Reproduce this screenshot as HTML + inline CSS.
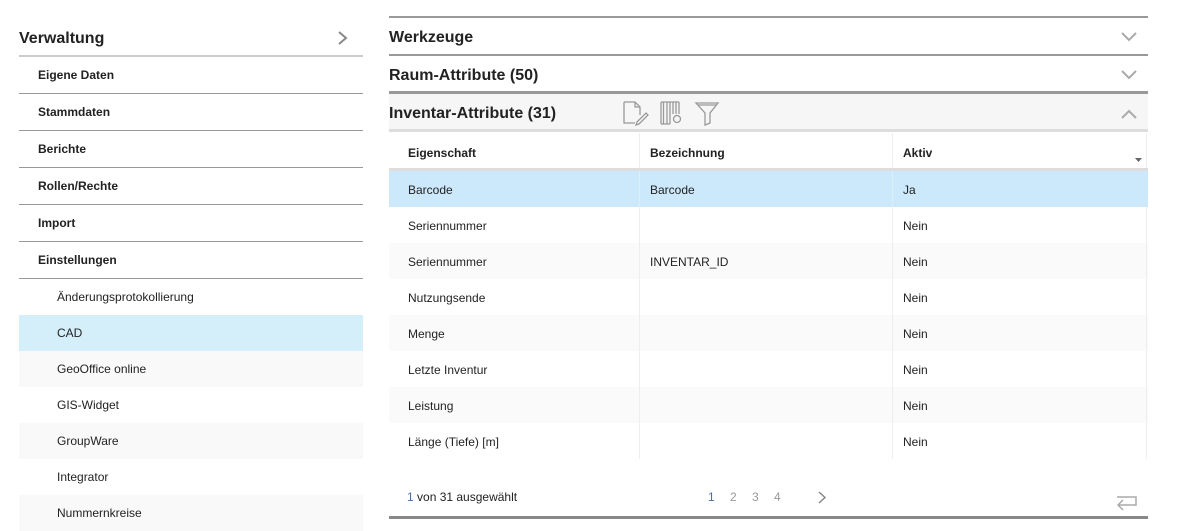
<!DOCTYPE html>
<html><head><meta charset="utf-8"><style>
*{box-sizing:border-box;margin:0;padding:0}
body{width:1182px;height:525px;background:#fff;font-family:"Liberation Sans",Arial,sans-serif;color:#222;position:relative;overflow:hidden}
.abs{position:absolute}
.lh{left:19px;width:344px;top:20px;height:37px;border-bottom:2px solid #ccc;font-size:16px;font-weight:bold;line-height:38px}
.li{left:19px;width:344px;height:37px;border-bottom:1px solid #999;font-size:12px;font-weight:bold;padding-left:19px;line-height:36px}
.ls{left:19px;width:344px;height:36px;font-size:12px;padding-left:38px;line-height:36px}
.rh{left:389px;width:759px;font-size:16px;font-weight:bold;line-height:40px}
.row{left:389px;width:759px;height:36px;font-size:12px;line-height:38px}
.row span{position:absolute;top:0}
.c1{left:19px}.c2{left:261px}.c3{left:514px}
.vl{position:absolute;top:0;bottom:0;width:1px;background:#eee}
</style></head><body>
<div class="abs lh">Verwaltung<svg class="abs" style="left:318px;top:11px" width="12" height="14"><path d="M2 1l7 6-7 6" fill="none" stroke="#888" stroke-width="2"/></svg></div>
<div class="abs li" style="top:57px">Eigene Daten</div>
<div class="abs li" style="top:94px">Stammdaten</div>
<div class="abs li" style="top:131px">Berichte</div>
<div class="abs li" style="top:168px">Rollen/Rechte</div>
<div class="abs li" style="top:205px">Import</div>
<div class="abs li" style="top:242px">Einstellungen</div>
<div class="abs ls" style="top:279px">Änderungsprotokollierung</div>
<div class="abs ls" style="top:315px;background:#d4effa">CAD</div>
<div class="abs ls" style="top:351px;background:#f9f9f9">GeoOffice online</div>
<div class="abs ls" style="top:387px">GIS-Widget</div>
<div class="abs ls" style="top:423px;background:#f9f9f9">GroupWare</div>
<div class="abs ls" style="top:459px">Integrator</div>
<div class="abs ls" style="top:495px;background:#f9f9f9">Nummernkreise</div>

<div class="abs" style="left:389px;width:759px;top:16px;height:2px;background:#999"></div>
<div class="abs rh" style="top:18px;height:38px;border-bottom:2px solid #999">Werkzeuge<svg class="abs" style="left:732px;top:14px" width="16" height="10"><path d="M1 1l7 7 7-7" fill="none" stroke="#aaa" stroke-width="2"/></svg></div>
<div class="abs rh" style="top:56px;height:38px;border-bottom:3px solid #999">Raum-Attribute (50)<svg class="abs" style="left:732px;top:14px" width="16" height="10"><path d="M1 1l7 7 7-7" fill="none" stroke="#aaa" stroke-width="2"/></svg></div>
<div class="abs rh" style="top:94px;height:38px;background:#f6f6f6;border-bottom:3px solid #ddd">Inventar-Attribute (31)
<svg class="abs" style="left:233px;top:6px" width="100" height="26" fill="none" stroke="#999" stroke-width="1.3">
<path d="M2 2h11l5 5v8M2 2v21h11M13 2v5h5"/><path d="M15 22l9-9 2 2-9 9-3 1z"/>
<path d="M39 2v22M41.5 2v22M45 2v22M48 2v22M51 2v12M54 2v12M57 2v12M39 2h18M39 24h9"/><circle cx="55" cy="19" r="3.5"/>
<path d="M74 3h22l-8 10v10l-5 2v-12z"/><path d="M76 5h18"/></svg>
<svg class="abs" style="left:732px;top:15px" width="16" height="10"><path d="M1 9l7-7 7 7" fill="none" stroke="#aaa" stroke-width="2"/></svg></div>

<div class="abs row" style="top:133px;height:38px;line-height:40px;font-weight:bold;border-bottom:3px solid #ddd"><span class="c1">Eigenschaft</span><span class="c2">Bezeichnung</span><span class="c3">Aktiv</span><div class="vl" style="left:250px"></div><div class="vl" style="left:503px"></div><div class="vl" style="left:757px"></div><svg class="abs" style="left:746px;top:25px" width="8" height="5"><path d="M0 0h7l-3.5 4z" fill="#666"/></svg></div>
<div class="abs row" style="top:171px;background:#cce8fb"><span class="c1">Barcode</span><span class="c2">Barcode</span><span class="c3">Ja</span><div class="vl" style="left:250px;background:#dbeefc"></div><div class="vl" style="left:503px;background:#dbeefc"></div></div>
<div class="abs row" style="top:207px"><span class="c1">Seriennummer</span><span class="c3">Nein</span><div class="vl" style="left:250px"></div><div class="vl" style="left:503px"></div><div class="vl" style="left:757px"></div></div>
<div class="abs row" style="top:243px;background:#fafafa"><span class="c1">Seriennummer</span><span class="c2">INVENTAR_ID</span><span class="c3">Nein</span><div class="vl" style="left:250px"></div><div class="vl" style="left:503px"></div><div class="vl" style="left:757px"></div></div>
<div class="abs row" style="top:279px"><span class="c1">Nutzungsende</span><span class="c3">Nein</span><div class="vl" style="left:250px"></div><div class="vl" style="left:503px"></div><div class="vl" style="left:757px"></div></div>
<div class="abs row" style="top:315px;background:#fafafa"><span class="c1">Menge</span><span class="c3">Nein</span><div class="vl" style="left:250px"></div><div class="vl" style="left:503px"></div><div class="vl" style="left:757px"></div></div>
<div class="abs row" style="top:351px"><span class="c1">Letzte Inventur</span><span class="c3">Nein</span><div class="vl" style="left:250px"></div><div class="vl" style="left:503px"></div><div class="vl" style="left:757px"></div></div>
<div class="abs row" style="top:387px;background:#fafafa"><span class="c1">Leistung</span><span class="c3">Nein</span><div class="vl" style="left:250px"></div><div class="vl" style="left:503px"></div><div class="vl" style="left:757px"></div></div>
<div class="abs row" style="top:423px"><span class="c1">Länge (Tiefe) [m]</span><span class="c3">Nein</span><div class="vl" style="left:250px"></div><div class="vl" style="left:503px"></div><div class="vl" style="left:757px"></div></div>

<div class="abs" style="left:407px;top:490px;font-size:12px"><span style="color:#4a6fa5">1</span> von 31 ausgewählt</div>
<div class="abs" style="left:708px;top:490px;font-size:12px;color:#999;word-spacing:12px"><span style="color:#4a6fa5">1</span> 2 3 4</div>
<svg class="abs" style="left:817px;top:491px" width="10" height="13"><path d="M2 1l6 5.5-6 5.5" fill="none" stroke="#888" stroke-width="1.5"/></svg>
<svg class="abs" style="left:1114px;top:493px" width="26" height="22"><path d="M3 4h19v8H4M9 7l-5 5 5 5" fill="none" stroke="#aaa" stroke-width="1.5"/></svg>
<div class="abs" style="left:389px;width:759px;top:516px;height:3px;background:#888"></div>
</body></html>
